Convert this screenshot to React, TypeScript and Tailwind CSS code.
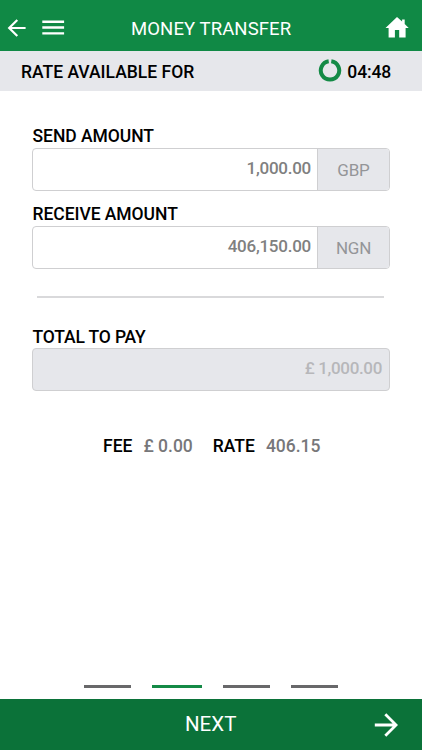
import React from 'react';

const STEPS = [
  { id: 1, width: 'w-[47px]', color: 'bg-[#68686a]' },
  { id: 2, width: 'w-[50px]', color: 'bg-[#148a46]' },
  { id: 3, width: 'w-[47px]', color: 'bg-[#68686a]' },
  { id: 4, width: 'w-[47px]', color: 'bg-[#68686a]' }
];

interface AmountFieldProps {
  label: string;
  value: string;
  currency: string;
}

const AmountField: React.FC<AmountFieldProps> = ({ label, value, currency }) => (
  <div className="h-[78px]">
    <p className="h-[23px] pl-[0.5px] text-[17.5px] leading-[23px] font-medium tracking-[-0.05px]">
      {label}
    </p>
    <div className="flex h-[43px] overflow-hidden rounded-[4px] border border-[#cfcfd1] bg-white">
      <div className="flex-1 pr-[6px] text-right text-[17px] leading-[39px] font-medium tracking-[-0.25px] text-[#808080]">
        {value}
      </div>
      <div className="w-[72px] border-l border-[#cfcfd1] bg-[#e6e7eb] text-center text-[17px] leading-[42px] tracking-[-0.2px] text-[#949598]">
        {currency}
      </div>
    </div>
  </div>
);

export default function App() {
  return (
    <div className="flex h-[750px] w-[422px] flex-col overflow-hidden bg-white font-['Roboto',sans-serif] text-black">
      <header className="flex h-[51px] shrink-0 items-center bg-[#108945] pt-[4px] text-white">
        <div className="flex w-[131px] items-center pl-[7px]">
          <svg className="h-[18px] w-[19px]" viewBox="0 0 19 18" fill="none" stroke="currentColor" strokeWidth="2.2">
            <path d="M10.3 1 2.2 9l8.1 8M2.2 9h16.4" />
          </svg>
          <svg className="ml-[16px] h-[18px] w-[23px]" viewBox="0 0 23 18" fill="currentColor">
            <path d="M.3 1.5h21.8v2.4H.3zM.3 7.3h21.8v2.4H.3zM.3 13.2h21.8v2.4H.3z" />
          </svg>
        </div>
        <h1 className="flex-1 pt-[2px] text-[18.5px] leading-[22px] tracking-[0.1px] whitespace-nowrap">
          MONEY TRANSFER
        </h1>
        <svg className="mr-[13px] h-[21px] w-[24px]" viewBox="0 0 24 21" fill="currentColor">
          <path d="M12 0 .5 10.9h3.1v9.6h6.3v-7.4h4.3v7.4h6.4v-9.6h3.1l-4-3.8V2.4h-2.6v2.1z" />
        </svg>
      </header>

      <section className="flex h-[40px] shrink-0 items-center bg-[#e6e7eb] pr-[31px] pl-[21px] text-[17.5px] font-medium">
        <p className="flex-1 pt-[2px]">RATE AVAILABLE FOR</p>
        <svg className="mr-[5px] h-[24px] w-[24px]" viewBox="0 0 24 24" fill="none">
          <path d="M13.3 2.3a9.2 9.2 0 1 1-2.6 0" stroke="#148a46" strokeWidth="4" />
        </svg>
        <p className="pt-[2px] tracking-[-0.15px]">04:48</p>
      </section>

      <main className="flex-1 pt-[34px] pr-[32px] pl-[32px]">
        <AmountField label="SEND AMOUNT" value="1,000.00" currency="GBP" />
        <AmountField label="RECEIVE AMOUNT" value="406,150.00" currency="NGN" />

        <div className="mt-[15px] ml-[5px] h-[2px] w-[347px] bg-[#d9d9db]" />

        <p className="mt-[27px] h-[23px] pl-[0.5px] text-[17.5px] leading-[24px] font-medium tracking-[-0.15px]">
          TOTAL TO PAY
        </p>
        <div className="h-[43px] rounded-[4px] border border-[#cfcfd1] bg-[#e6e7eb] pr-[7px] text-right text-[17px] leading-[39px] font-medium tracking-[-0.35px] text-[#b7b7ba]">
          £ 1,000.00
        </div>

        <div className="mt-[43px] flex pl-[71px] text-[17.5px] leading-[24px] font-medium whitespace-nowrap">
          <span>FEE</span>
          <span className="ml-[11px] text-[#77777a]">£ 0.00</span>
          <span className="ml-[20px]">RATE</span>
          <span className="ml-[11px] text-[#77777a]">406.15</span>
        </div>
      </main>

      <div className="mb-[10px] flex h-[4px] shrink-0 gap-[21px] pl-[84px]">
        {STEPS.map((step) => (
          <span key={step.id} className={`h-[3px] ${step.width} ${step.color}`} />
        ))}
      </div>

      <footer className="flex h-[51px] shrink-0 items-center bg-[#0b7239] text-white">
        <button className="flex-1 pb-[1px] pl-[185px] text-left text-[20.5px] leading-[24px]">NEXT</button>
        <svg className="mt-[1px] mr-[24px] h-[24px] w-[24px]" viewBox="0 0 24 24" fill="none" stroke="currentColor" strokeWidth="2.8">
          <path d="M.8 12h21M11.3 1.2 22.1 12 11.3 22.8" />
        </svg>
      </footer>
    </div>
  );
}
